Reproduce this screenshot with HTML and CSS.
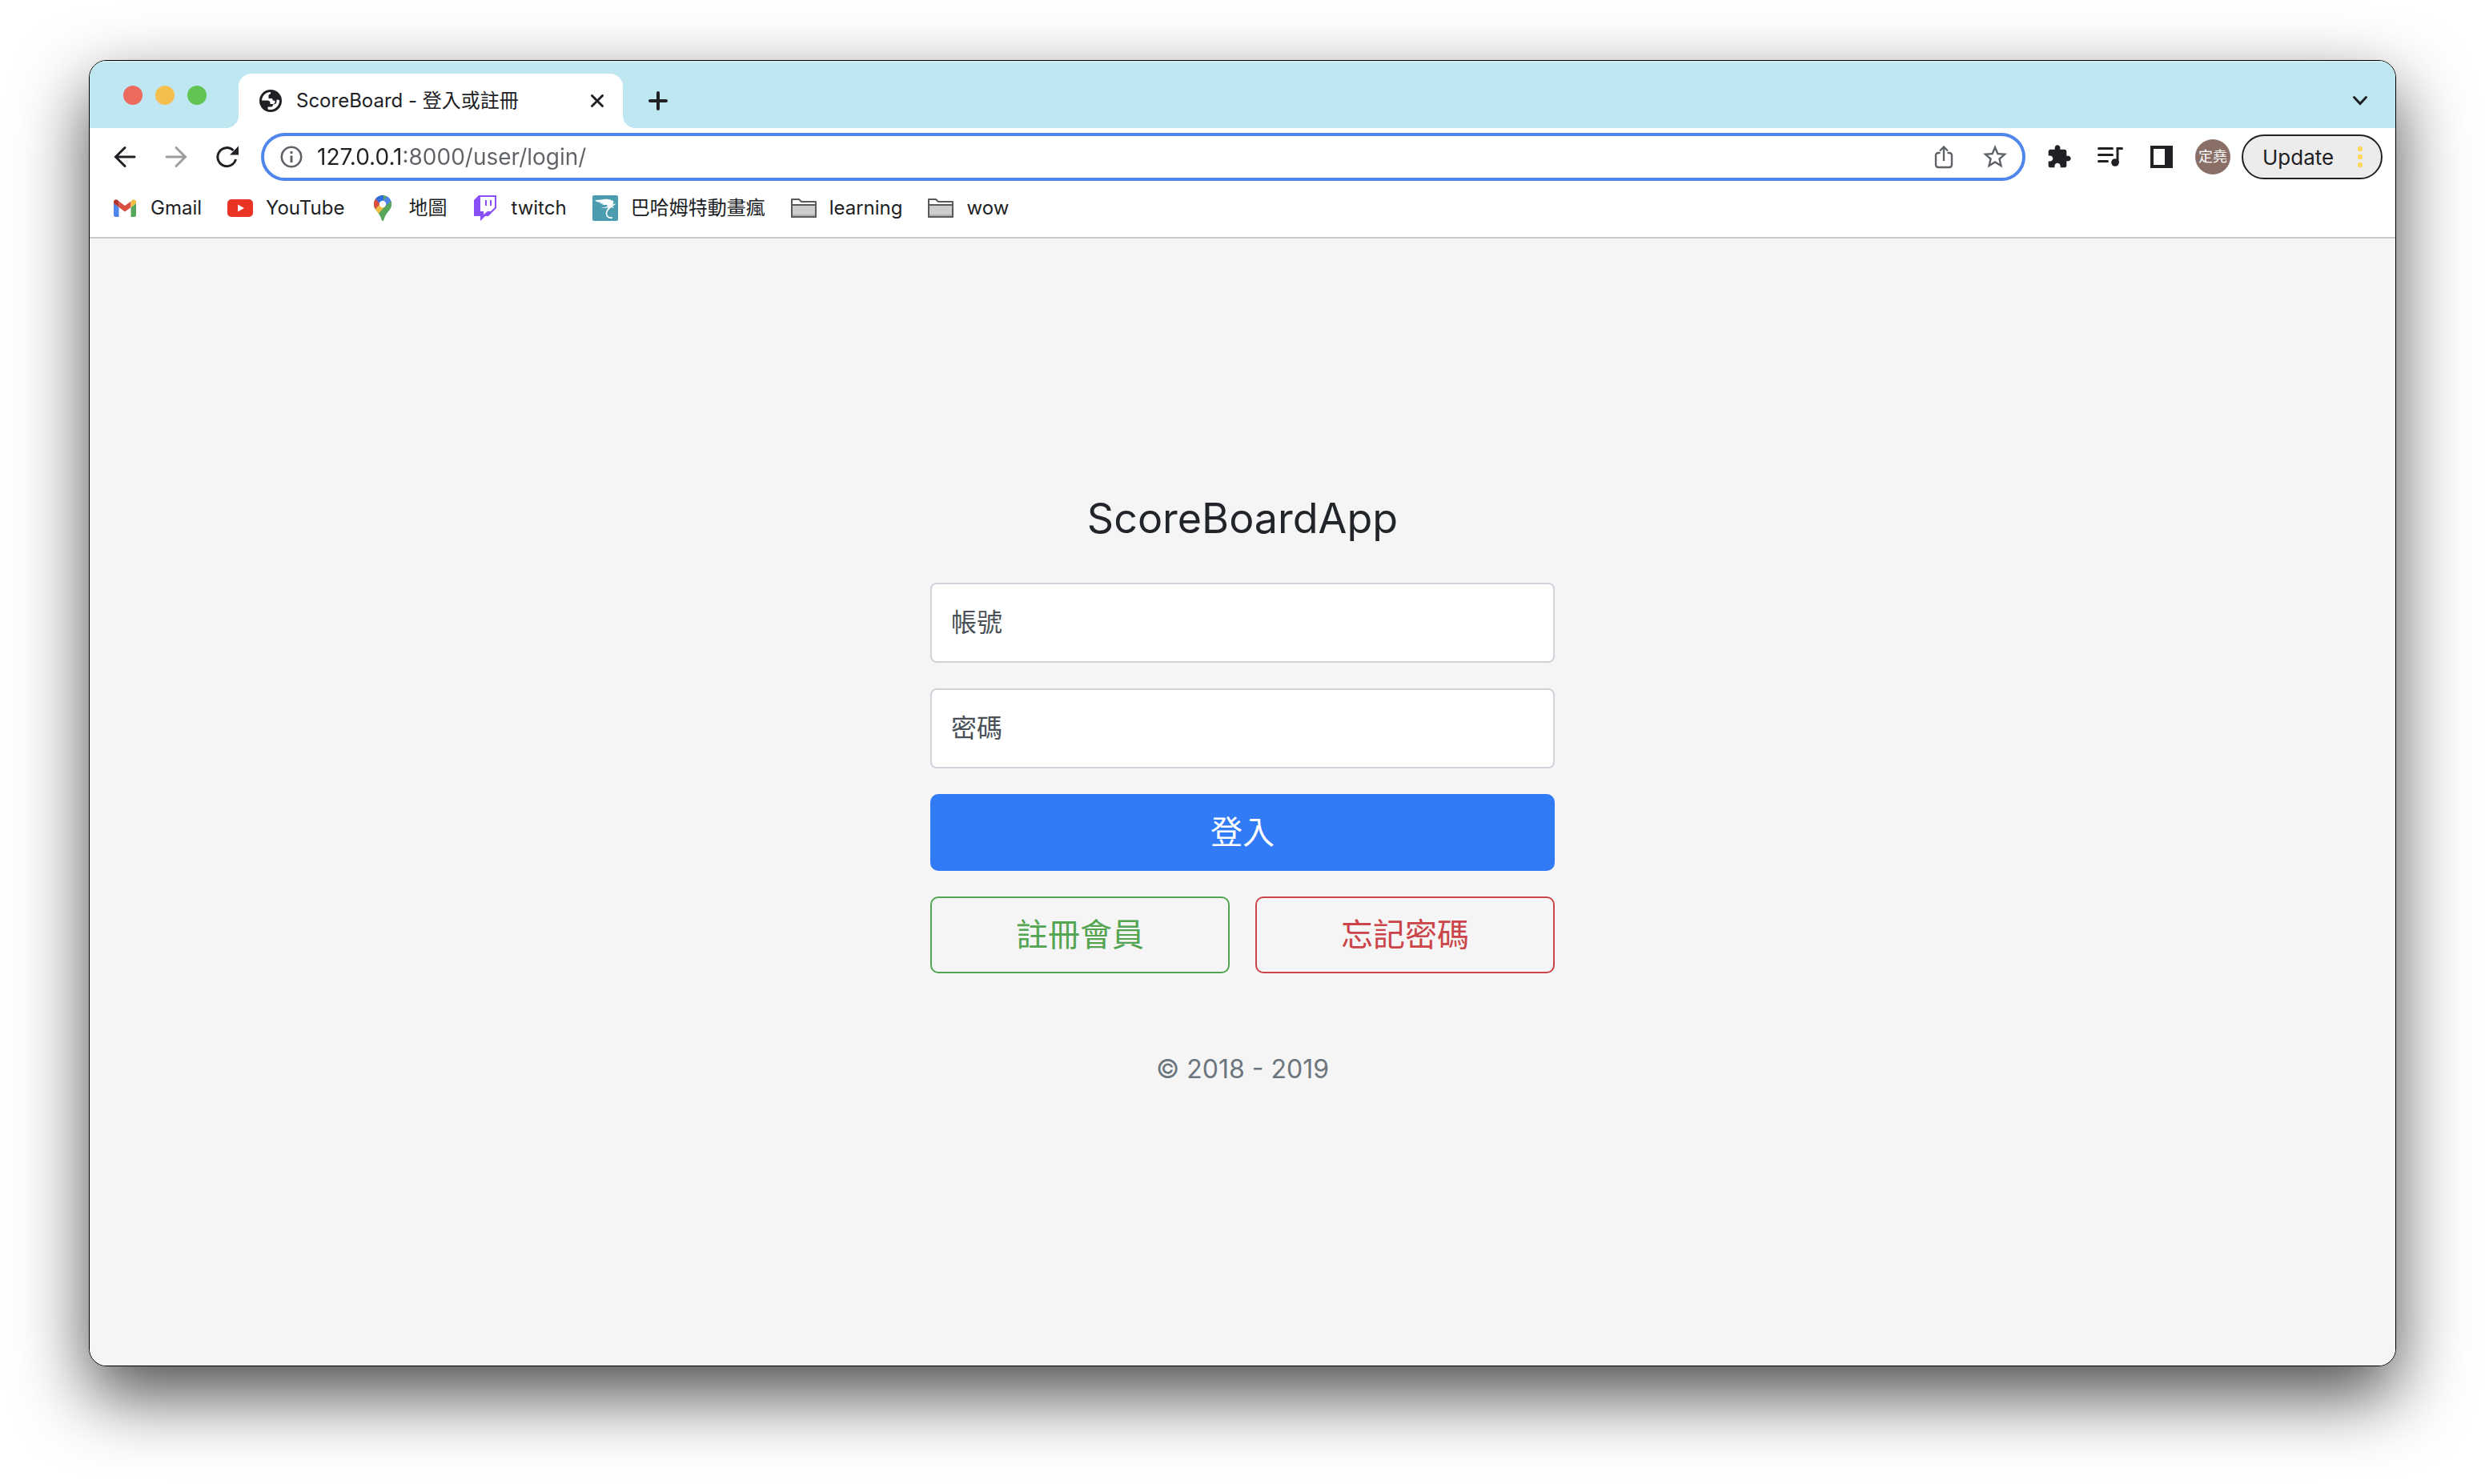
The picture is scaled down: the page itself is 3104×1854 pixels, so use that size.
FILE: index.html
```html
<!DOCTYPE html>
<html lang="zh-Hant">
<head>
<meta charset="utf-8">
<title>ScoreBoard - 登入或註冊</title>
<link rel="stylesheet" href="styles.css">
</head>
<body>
<div class="window">
  <header class="tab-strip">
    <div class="lights">
      <button class="light light-close" aria-label="Close window"></button>
      <button class="light light-min" aria-label="Minimize window"></button>
      <button class="light light-max" aria-label="Zoom window"></button>
    </div>
    <div class="tab">
      <svg class="icon-28" viewBox="0 0 28 28" aria-hidden="true"><circle cx="14" cy="14" r="14" fill="#202124"/><path fill="#fff" d="M14 3C8 3 3.500 7.500 3 13.500h6.500c2.500 0 4 1 4 3V18H17c1.500 0 2.500-1 2.500-2.500V14c-2 0-3.500-1-3.500-3h-4.500V7.500c0-1.500 1-2 2.500-2zM25 13c.500 6-4.500 12-11 12-1.500 0-2.500-.200-3.500-.600V21.500H14c1.500 0 3-.500 3-2.500v-.500c3 0 4.500-1.500 4.500-4V12.500z"/></svg>
      <span class="tab-title">ScoreBoard - 登入或註冊</span>
      <button class="plain" aria-label="Close tab"><svg width="16" height="16" viewBox="0 0 16 16"><path d="M1.500 1.500l13 13M14.500 1.500l-13 13" stroke="#202124" stroke-width="3" stroke-linecap="round"/></svg></button>
    </div>
    <button class="plain new-tab" aria-label="New tab"><svg width="24" height="24" viewBox="0 0 24 24"><path d="M12 2v20M2 12h20" stroke="#202124" stroke-width="4" stroke-linecap="round"/></svg></button>
    <button class="plain tab-search" aria-label="Search tabs"><svg width="20" height="14" viewBox="0 0 20 14"><path d="M2.500 2.500L10 10.500l7.500-8" fill="none" stroke="#202124" stroke-width="3" stroke-linecap="round"/></svg></button>
  </header>

  <div class="toolbar">
    <button class="plain nav" aria-label="Back"><svg width="28" height="28" viewBox="0 0 28 28"><path d="M26 14H3M14 2.500L2.500 14 14 25.500" fill="none" stroke="#202124" stroke-width="3" stroke-linecap="round"/></svg></button>
    <button class="plain nav" aria-label="Forward"><svg width="28" height="28" viewBox="0 0 28 28"><path d="M2 14h23M14 2.500L25.500 14 14 25.500" fill="none" stroke="#9e9e9e" stroke-width="3" stroke-linecap="round"/></svg></button>
    <button class="plain nav" aria-label="Reload"><svg width="28" height="28" viewBox="0 0 28 28"><path d="M24.500 17A11.500 11.500 0 1 1 21.500 6" fill="none" stroke="#202124" stroke-width="3"/><path d="M28 .500v11H17z" fill="#202124"/></svg></button>
    <form class="omnibox">
      <svg class="icon-28" viewBox="0 0 28 28" aria-hidden="true"><circle cx="14" cy="14" r="12.200" fill="none" stroke="#5f6368" stroke-width="2.600"/><path d="M12.500 12.500h3V21h-3zM12.500 7h3v3h-3z" fill="#5f6368"/></svg>
      <input class="url" type="text" aria-label="Address" value="127.0.0.1:8000/user/login/">
      <button class="plain" type="button" aria-label="Share"><svg width="24" height="30" viewBox="0 0 24 30"><path d="M7.500 10H5a3 3 0 0 0-3 3v12a3 3 0 0 0 3 3h14a3 3 0 0 0 3-3V13a3 3 0 0 0-3-3h-2.500M12 20V3M7 7.500l5-5 5 5" fill="none" stroke="#5f6368" stroke-width="2.400"/></svg></button>
      <button class="plain" type="button" aria-label="Bookmark this tab"><svg width="36" height="36" viewBox="0 0 24 24"><path fill="#5f6368" d="M22 9.240l-7.190-.620L12 2 9.190 8.630 2 9.240l5.460 4.730L5.820 21 12 17.270 18.180 21l-1.630-7.030L22 9.240zM12 15.400l-3.760 2.270 1-4.280-3.320-2.880 4.380-.380L12 6.100l1.710 4.040 4.380.380-3.320 2.880 1 4.280L12 15.400z"/></svg></button>
    </form>
    <div class="actions">
      <button class="plain" aria-label="Extensions"><svg width="32" height="32" viewBox="0 0 24 24"><path fill="#202124" d="M20.500 11H19V7c0-1.100-.900-2-2-2h-4V3.500C13 2.120 11.880 1 10.500 1S8 2.120 8 3.500V5H4c-1.100 0-1.990.900-1.990 2v3.800H3.500c1.490 0 2.700 1.210 2.700 2.700s-1.210 2.700-2.700 2.700H2V20c0 1.100.900 2 2 2h3.800v-1.500c0-1.490 1.210-2.700 2.700-2.700 1.490 0 2.700 1.210 2.700 2.700V22H17c1.100 0 2-.900 2-2v-4h1.500c1.380 0 2.500-1.120 2.500-2.500S21.880 11 20.500 11z"/></svg></button>
      <button class="plain" aria-label="Media controls"><svg width="32" height="32" viewBox="0 0 32 32"><path d="M1.500 5.500h17M1.500 13.500h17M1.500 21.500h11M25 23V5.500h5.500" fill="none" stroke="#202124" stroke-width="3" stroke-linecap="round"/><circle cx="22" cy="23" r="4.800" fill="#202124"/></svg></button>
      <button class="plain" aria-label="Side panel"><svg width="32" height="32" viewBox="0 0 32 32"><path fill="#202124" fill-rule="evenodd" d="M2 2h28v28H2zM6 6v20h14V6z"/></svg></button>
      <button class="avatar" aria-label="Profile">定堯</button>
    </div>
    <button class="update">Update<svg width="8" height="28" viewBox="0 0 8 28" aria-hidden="true"><g fill="#fdd663"><circle cx="4" cy="4" r="3.200"/><circle cx="4" cy="14" r="3.200"/><circle cx="4" cy="24" r="3.200"/></g></svg></button>
  </div>

  <nav class="bookmarks">
    <a href="#"><svg class="icon-32" viewBox="0 0 32 32" aria-hidden="true"><path fill="#4f86ec" d="M2 10l6.500 5v12H4a2 2 0 0 1-2-2z"/><path fill="#58a55c" d="M30 10l-6.500 5v12H28a2 2 0 0 0 2-2z"/><path fill="#d85140" d="M8.500 7.500L16 13l7.500-5.500V15L16 20.500 8.500 15z"/><path fill="#b0342b" d="M2 8.500c0-3 3-4 5-2.500l1.500 1.500V15L2 10z"/><path fill="#f1bd42" d="M30 8.500c0-3-3-4-5-2.500l-1.500 1.500V15L30 10z"/></svg>Gmail</a>
    <a href="#"><svg class="icon-32" viewBox="0 0 32 32" aria-hidden="true"><rect y="5" width="32" height="22" rx="5" fill="#e93323"/><path fill="#fff" d="M13 11.500v9l8-4.500z"/></svg>YouTube</a>
    <a href="#"><svg class="icon-32" viewBox="0 0 32 32" aria-hidden="true"><clipPath id="pin"><path d="M16 0C9.500 0 5 5 5 11c0 7 5.500 9 8.500 16 .8 1.800 1.500 5 2.500 5s1.700-3.200 2.500-5C21.500 20 27 18 27 11 27 5 22.500 0 16 0z"/></clipPath><g clip-path="url(#pin)"><path fill="#58a55c" d="M0 0h32v32H0z"/><path fill="#f1bd42" d="M3 18L16 4l8 4L9.500 25z"/><path fill="#d85140" d="M3 3l5 1 6 6-9 9z"/><path fill="#2f6de0" d="M5 0h12v9l-3 3-6.500-7z"/><path fill="#4f86ec" d="M15 8l8-8 6 8-10 6z"/><path fill="#58a55c" d="M28 5.500L18 15 9 25v7h20z"/></g><circle cx="16" cy="11" r="4.200" fill="#fff"/></svg>地圖</a>
    <a href="#"><svg class="icon-32" viewBox="0 0 32 32" aria-hidden="true"><path fill="#8950f7" d="M8 0h22v16L20 26h-4l-6 6v-6H2V6z"/><path fill="#fff" d="M10 2h18v13l-5 5h-4l-5 4v-4h-4z"/><path fill="#8950f7" d="M16 6h2v7h-2zM22 6h2v7h-2z"/></svg>twitch</a>
    <a href="#"><svg class="icon-32" viewBox="0 0 32 32" aria-hidden="true"><rect width="32" height="32" rx="2" fill="#4a9cae"/><path fill="#fff" d="M3 6c6 .500 11-2 17-1 3 .500 5 1.500 6.500 2.500l-1 4 3.500-1.500c-.500 2-2 3-4 3.500l2 2.500-3-1c-1 .500-2 1.500-3.500 2L17 19l3-3.500-10 .500 9-2-1-2-6 0 2-1.200L8.500 10l2.500-1L5.500 8z"/><path d="M22 15.500c-4 3.500-5.500 7.500-3.500 10.500 1.200 1.800 3.500 2.500 6.500 2" fill="none" stroke="#fff" stroke-width="1.600"/></svg>巴哈姆特動畫瘋</a>
    <a href="#"><svg class="icon-32" viewBox="0 0 32 32" aria-hidden="true"><path fill="#fff" stroke="#5a5a5a" stroke-width="2" stroke-linejoin="round" d="M1 5h9l3 3h18v19H1z"/><path fill="#cdcdcd" stroke="#5a5a5a" stroke-width="2" stroke-linejoin="round" d="M1 12h30v15H1z"/><path d="M2 25h28" stroke="#b0b0b0" stroke-width="2"/></svg>learning</a>
    <a href="#"><svg class="icon-32" viewBox="0 0 32 32" aria-hidden="true"><path fill="#fff" stroke="#5a5a5a" stroke-width="2" stroke-linejoin="round" d="M1 5h9l3 3h18v19H1z"/><path fill="#cdcdcd" stroke="#5a5a5a" stroke-width="2" stroke-linejoin="round" d="M1 12h30v15H1z"/><path d="M2 25h28" stroke="#b0b0b0" stroke-width="2"/></svg>wow</a>
  </nav>

  <main class="page">
    <form class="login">
      <h1 class="login-title">ScoreBoardApp</h1>
      <div class="form-group">
        <input class="field" id="account" type="text">
        <label class="field-label" for="account">帳號</label>
      </div>
      <div class="form-group">
        <input class="field" id="password" type="password">
        <label class="field-label" for="password">密碼</label>
      </div>
      <button class="btn btn-primary" type="submit">登入</button>
      <div class="btn-row">
        <button class="btn btn-register" type="button">註冊會員</button>
        <button class="btn btn-forgot" type="button">忘記密碼</button>
      </div>
      <p class="copyright">© 2018 - 2019</p>
    </form>
  </main>
</div>
</body>
</html>
```
FILE: styles.css
```css
* {
  box-sizing: border-box;
}

body {
  margin: 0;
  min-height: 100vh;
  display: flex;
  padding: 75px 111px 147px;
  background: #fff;
  color: #202124;
  font-family: Inter, "Noto Sans CJK TC", sans-serif;
  font-size: 24px;
}

button,
input {
  font: inherit;
  color: inherit;
}

svg {
  display: block;
  flex: none;
}

.icon-28 {
  width: 28px;
  height: 28px;
}

.icon-32 {
  width: 32px;
  height: 32px;
}

.plain {
  display: flex;
  padding: 0;
  border: 0;
  background: none;
}

.window {
  flex: 1;
  min-width: 0;
  display: flex;
  flex-direction: column;
  overflow: hidden;
  border: 1px solid #000;
  border-radius: 22px;
  background: #fff;
  box-shadow: 0 36px 88px rgba(0, 0, 0, 0.7);
}

/* Tab strip */
.tab-strip {
  display: flex;
  align-items: center;
  height: 84px;
  padding: 16px 34px 0 42px;
  background: #bfe7f1;
  box-shadow: inset 0 2px #cdeff5;
}

.lights {
  display: flex;
  gap: 16px;
  width: 144px;
  padding-bottom: 14px;
}

.light {
  width: 24px;
  height: 24px;
  padding: 0;
  border: 0;
  border-radius: 50%;
}

.light-close {
  background: #ed6a5e;
}

.light-min {
  background: #f5bf4f;
}

.light-max {
  background: #61c554;
}

.tab {
  position: relative;
  display: flex;
  align-items: center;
  gap: 18px;
  width: 480px;
  height: 68px;
  padding: 0 24px 0 26px;
  border-radius: 16px 16px 0 0;
  background: #fff;
}

.tab::before,
.tab::after {
  content: "";
  position: absolute;
  bottom: 0;
  width: 16px;
  height: 16px;
}

.tab::before {
  right: 100%;
  background: radial-gradient(circle at 0 0, transparent 16px, #fff 16px);
}

.tab::after {
  left: 100%;
  background: radial-gradient(circle at 100% 0, transparent 16px, #fff 16px);
}

.tab-title {
  flex: 1;
  line-height: 28px;
  white-space: nowrap;
}

.new-tab {
  margin-left: 32px;
}

.tab-search {
  margin-left: auto;
}

/* Toolbar */
.toolbar {
  display: flex;
  align-items: center;
  height: 72px;
  padding: 0 16px 0 30px;
}

.nav {
  margin-right: 36px;
}

.omnibox {
  flex: 1;
  display: flex;
  align-items: center;
  gap: 18px;
  height: 60px;
  margin-left: -8px;
  padding: 0 16px 0 20px;
  border: 4px solid #4f86ec;
  border-radius: 30px;
}

/* The host is drawn darker than the rest of the address */
.url {
  flex: 1;
  min-width: 0;
  padding: 0;
  border: 0;
  outline: 0;
  font-size: 28px;
  color: transparent;
  background: linear-gradient(90deg, #202124 109px, #5f6368 109px);
  background-clip: text;
}

.omnibox .plain + .plain {
  margin-left: 16px;
}

.actions {
  display: flex;
  align-items: center;
  gap: 32px;
  margin: 0 14px 0 26px;
}

.avatar {
  width: 44px;
  height: 44px;
  margin-left: -6px;
  padding: 0;
  border: 0;
  border-radius: 50%;
  background: #8a6f66;
  color: #fff;
  font-size: 18px;
  line-height: 44px;
}

.update {
  display: flex;
  align-items: center;
  justify-content: space-between;
  width: 176px;
  height: 56px;
  padding: 0 22px 0 24px;
  border: 2px solid #202124;
  border-radius: 28px;
  background: #ececec;
  font-size: 26px;
}

/* Bookmarks */
.bookmarks {
  display: flex;
  align-items: flex-start;
  gap: 32px;
  height: 66px;
  padding: 12px 28px 0;
  border-bottom: 2px solid #cbcbcb;
}

.bookmarks a {
  display: flex;
  align-items: center;
  gap: 16px;
  line-height: 32px;
  color: inherit;
  text-decoration: none;
  white-space: nowrap;
}

/* Login page */
.page {
  flex: 1;
  display: flex;
  align-items: center;
  justify-content: center;
  padding: 0 32px 30px;
  background: #f5f5f5;
}

.login {
  display: flex;
  flex-direction: column;
  gap: 32px;
  width: 780px;
}

.login-title {
  margin: 0 0 14px;
  font-size: 52px;
  font-weight: 400;
  line-height: 68px;
  text-align: center;
  color: #212529;
}

.form-group {
  position: relative;
}

.field {
  display: block;
  width: 100%;
  height: 100px;
  padding: 0 24px;
  border: 2px solid #ced4da;
  border-radius: 8px;
  background: #fff;
  font-size: 32px;
}

.field-label {
  position: absolute;
  inset: 0;
  padding: 0 26px;
  font-size: 32px;
  line-height: 100px;
  color: #495057;
  pointer-events: none;
}

.btn {
  flex: 1;
  min-height: 96px;
  padding: 0;
  border: 2px solid currentColor;
  border-radius: 10px;
  background: transparent;
  font-size: 40px;
  line-height: 60px;
}

.btn-primary {
  border-color: #327bf6;
  background: #327bf6;
  color: #fff;
}

.btn-row {
  display: flex;
  gap: 32px;
}

.btn-register {
  color: #53a551;
}

.btn-forgot {
  color: #cb444a;
}

.copyright {
  margin: 64px 0 0;
  font-size: 32px;
  line-height: 48px;
  text-align: center;
  color: #6c757d;
}
```
